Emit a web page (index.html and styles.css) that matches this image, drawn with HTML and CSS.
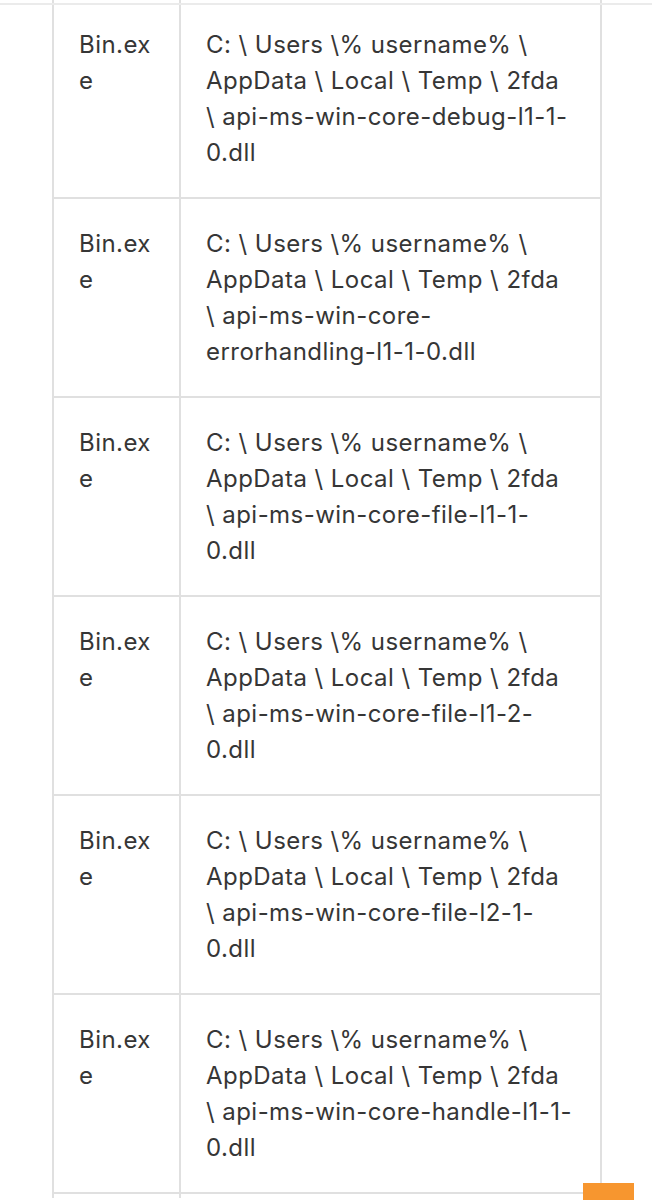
FILE: index.html
```html
<!DOCTYPE html>
<html lang="en">
<head>
<meta charset="utf-8">
<title>Files</title>
<link rel="stylesheet" href="styles.css">
</head>
<body>
<div class="topline"></div>
<main class="page">
  <table class="files">
    <colgroup><col class="c-proc"><col class="c-path"></colgroup>
    <tbody>
      <tr><td class="proc">Bin.exe</td><td>C: \ Users \% username% \ AppData \ Local \ Temp \ 2fda \ api-ms-win-core-debug-l1-1-0.dll</td></tr>
      <tr><td class="proc">Bin.exe</td><td>C: \ Users \% username% \ AppData \ Local \ Temp \ 2fda \ api-ms-win-core-errorhandling-l1-1-0.dll</td></tr>
      <tr><td class="proc">Bin.exe</td><td>C: \ Users \% username% \ AppData \ Local \ Temp \ 2fda \ api-ms-win-core-file-l1-1-0.dll</td></tr>
      <tr><td class="proc">Bin.exe</td><td>C: \ Users \% username% \ AppData \ Local \ Temp \ 2fda \ api-ms-win-core-file-l1-2-0.dll</td></tr>
      <tr><td class="proc">Bin.exe</td><td>C: \ Users \% username% \ AppData \ Local \ Temp \ 2fda \ api-ms-win-core-file-l2-1-0.dll</td></tr>
      <tr><td class="proc">Bin.exe</td><td>C: \ Users \% username% \ AppData \ Local \ Temp \ 2fda \ api-ms-win-core-handle-l1-1-0.dll</td></tr>
      <tr class="next"><td class="proc"></td><td></td></tr>
    </tbody>
  </table>
</main>
<a class="to-top" href="#" aria-label="Back to top"></a>
</body>
</html>
```

FILE: styles.css
```css
html, body {
  margin: 0;
  padding: 0;
  background: #ffffff;
}
body {
  font-family: "Inter", "Liberation Sans", sans-serif;
  color: #363636;
  overflow: hidden;
}
.topline {
  position: fixed;
  top: 3px;
  left: 0;
  right: 0;
  height: 2px;
  background: #ebebeb;
  z-index: 2;
}
.page {
  padding: 0 52px 0 52px;
  margin-top: -2px;
}
.files {
  width: 548px;
  table-layout: fixed;
  border-collapse: collapse;
  font-size: 24px;
  letter-spacing: 0.45px;
  line-height: 36px;
}
.c-proc { width: 127px; }
.c-path { width: 421px; }
.files td {
  border: 2px solid #e0e0e0;
  padding: 26.5px 26px 26.5px 25px;
  vertical-align: top;
  overflow-wrap: anywhere;
}
.files .next td {
  height: 4px;
  padding: 0;
  border-bottom: 0;
}
.to-top {
  position: fixed;
  right: 18px;
  bottom: -33px;
  width: 51px;
  height: 50px;
  background: #f7962f;
}
```
